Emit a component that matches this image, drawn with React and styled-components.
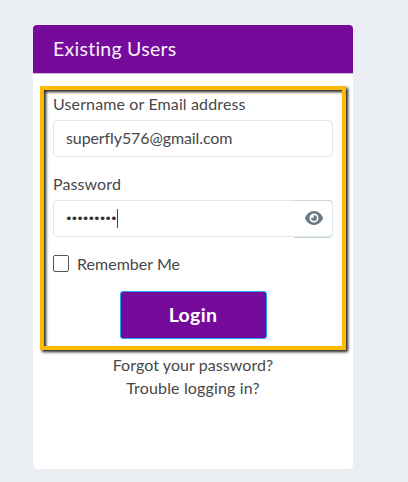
import React from "react";
import styled, { createGlobalStyle } from "styled-components";
import { FaEye } from "react-icons/fa6";

const GlobalStyle = createGlobalStyle`
  *, *::before, *::after { box-sizing: border-box; }
  body {
    margin: 0;
    background: #ebeef3;
    color: #48474a;
    font: 16px/20px Lato, "Open Sans", sans-serif;
  }
`;

const Page = styled.main`
  height: 482px;
  padding: 25px 55px 13px 33px;
  overflow: hidden;
`;

const Card = styled.section`
  position: relative;
  height: 444px;
  background: #fff;
  border-radius: 4px;
`;

const CardHeader = styled.header`
  height: 48px;
  padding: 0 20px;
  display: flex;
  align-items: center;
  background: #750b9a;
  box-shadow: 0 1px 0 #c9b3d6;
  border-radius: 4px 4px 0 0;
`;

const Title = styled.h1`
  margin: 0;
  color: #f8f0fb;
  font-size: 19.5px;
  line-height: 24px;
  font-weight: 400;
  letter-spacing: 0.26px;
`;

const Highlight = styled.div`
  position: absolute;
  left: 7px;
  top: 61px;
  width: 306px;
  height: 264px;
  border: 4px solid #fcba03;
  filter: drop-shadow(2px 2px 1.5px rgba(0, 0, 0, 0.9));
  pointer-events: none;
`;

const Form = styled.form`
  padding: 21px 20px 0;
  display: flex;
  flex-direction: column;
`;

const Text = styled.span`
  white-space: nowrap;
  letter-spacing: ${(p) => p.$tracking || 0}px;
`;

const Label = styled.label`
  height: 20px;
  margin-bottom: 6px;
`;

const Field = styled.div`
  height: 37px;
  margin-bottom: ${(p) => p.$gap}px;
  padding: 0 0 ${(p) => p.$lift || 0}px ${(p) => p.$inset}px;
  display: flex;
  align-items: center;
  border: 1px solid #dce8ee;
  border-radius: 4px;
`;

const Dots = styled.span`
  font: 13px/20px "DejaVu Sans", sans-serif;
  letter-spacing: -2.05px;
  margin-right: 1px;
  color: #333;
`;

const Caret = styled.span`
  width: 1px;
  height: 19px;
  background: #444;
`;

const Toggle = styled.button`
  width: 39px;
  height: 38px;
  margin: 0 -1px 0 auto;
  padding: 0 0 2px;
  display: flex;
  align-items: center;
  justify-content: center;
  border: solid #cbd5db;
  border-width: 1px 0;
  border-radius: 0 4px 4px 0;
  background: transparent;
  color: #6b7985;
`;

const CheckRow = styled.label`
  height: 20px;
  margin-bottom: 17px;
  display: flex;
  align-items: center;
  gap: 8px;
`;

const Checkbox = styled.input`
  appearance: none;
  width: 16px;
  height: 17px;
  margin: 0 0 1px;
  border: 1px solid #555;
  border-radius: 2px;
`;

const LoginButton = styled.button`
  align-self: center;
  width: 147px;
  height: 48px;
  padding: 0;
  border: 1px solid #20a4f5;
  border-radius: 3px;
  background: #750b9a;
  color: #fff;
  font: 700 19.5px/24px Lato, sans-serif;
  letter-spacing: 0.35px;
`;

const Links = styled.nav`
  margin-top: 14px;
  display: flex;
  flex-direction: column;
  align-items: center;
  line-height: 23px;
`;

export default function App() {
  return (
    <Page>
      <GlobalStyle />
      <Card>
        <CardHeader>
          <Title>Existing Users</Title>
        </CardHeader>
        <Form>
          <Label><Text $tracking={0.13}>Username or Email address</Text></Label>
          <Field $gap={17} $lift={2} $inset={12}>
            <Text $tracking={-0.1}>superfly576@gmail.com</Text>
          </Field>
          <Label><Text $tracking={0.1}>Password</Text></Label>
          <Field $gap={17} $inset={11}>
            <Dots>•••••••••</Dots>
            <Caret />
            <Toggle type="button" aria-label="Show password">
              <FaEye size={18} />
            </Toggle>
          </Field>
          <CheckRow>
            <Checkbox type="checkbox" />
            <Text $tracking={0.03}>Remember Me</Text>
          </CheckRow>
          <LoginButton type="button">Login</LoginButton>
        </Form>
        <Links>
          <Text $tracking={0.07}>Forgot your password?</Text>
          <Text $tracking={0.15}>Trouble logging in?</Text>
        </Links>
        <Highlight />
      </Card>
    </Page>
  );
}
